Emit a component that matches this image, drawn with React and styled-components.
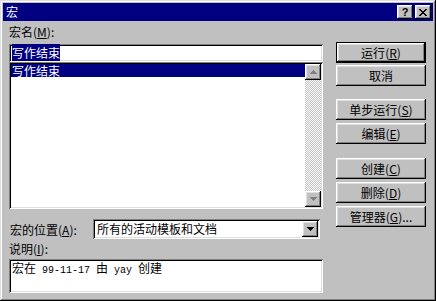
import React from 'react'
import styled, { createGlobalStyle } from 'styled-components'

const GlobalStyle = createGlobalStyle`
  html, body {
    margin: 0;
    padding: 0;
    background: #c0c0c0;
  }
  body {
    font-family: "Noto Sans CJK SC", "Noto Sans", sans-serif;
    font-size: 12px;
    color: #000;
  }
`

const raised = `
  box-shadow: inset -1px -1px #000, inset 1px 1px #fff,
    inset -2px -2px #808080, inset 2px 2px #dfdfdf;
`

const sunken = `
  box-shadow: inset 1px 1px #808080, inset -1px -1px #fff,
    inset 2px 2px #000, inset -2px -2px #dfdfdf;
`

const Window = styled.div`
  width: 436px;
  height: 301px;
  box-sizing: border-box;
  padding: 3px;
  background: #c0c0c0;
  box-shadow: inset -1px -1px #000, inset 1px 1px #dfdfdf,
    inset -2px -2px #808080, inset 2px 2px #fff;
  display: flex;
  flex-direction: column;
`

const TitleBar = styled.div`
  height: 18px;
  background: #000080;
  color: #fff;
  display: flex;
  align-items: center;
  padding: 0 2px 0 3px;
`

const Title = styled.span`
  flex: 1;
  font-size: 12px;
  line-height: 14px;
`

const TitleButton = styled.div`
  width: 16px;
  height: 14px;
  box-sizing: border-box;
  background: #c0c0c0;
  ${raised}
  display: flex;
  align-items: center;
  justify-content: center;
  margin-left: ${p => (p.$gap ? 2 : 0)}px;
  color: #000;
  font-family: "Liberation Sans", sans-serif;
  font-weight: bold;
  font-size: 11px;
  line-height: 1;
`

const Body = styled.div`
  display: grid;
  grid-template-columns: 314px 90px;
  column-gap: 13px;
  padding: 4px 0 0 6px;
`

const LeftCol = styled.div`
  display: flex;
  flex-direction: column;
`

const Label = styled.div`
  line-height: 14px;
  height: 14px;
  white-space: nowrap;
  margin-top: ${p => p.$top || 0}px;
`

const TextField = styled.div`
  height: 18px;
  box-sizing: border-box;
  background: #fff;
  ${sunken}
  margin-top: 5px;
  padding: 2px 0 0 3px;
  line-height: 13px;
`

const Selected = styled.span`
  background: #000080;
  color: #fff;
`

const ListBox = styled.div`
  height: 147px;
  box-sizing: border-box;
  background: #fff;
  ${sunken}
  padding: 2px;
  display: flex;
`

const ListItems = styled.div`
  flex: 1;
`

const ListItem = styled.div`
  height: 13px;
  line-height: 13px;
  padding-left: 1px;
  background: ${p => (p.$active ? '#000080' : 'transparent')};
  color: ${p => (p.$active ? '#fff' : '#000')};
`

const ScrollBar = styled.div`
  width: 16px;
  display: flex;
  flex-direction: column;
  justify-content: space-between;
  background-color: #c0c0c0;
  background-image: repeating-conic-gradient(#fff 0 25%, #c0c0c0 0 50%);
  background-size: 2px 2px;
`

const ArrowButton = styled.div`
  width: 16px;
  height: 16px;
  box-sizing: border-box;
  background: #c0c0c0;
  ${raised}
  display: flex;
  align-items: center;
  justify-content: center;
`

const ComboRow = styled.div`
  display: flex;
  align-items: center;
  margin-top: 10px;
  height: 20px;
`

const ComboLabel = styled.div`
  width: 83px;
  padding-left: 1px;
  white-space: nowrap;
`

const Combo = styled.div`
  flex: 1;
  height: 20px;
  box-sizing: border-box;
  background: #fff;
  ${sunken}
  padding: 2px;
  display: flex;
  align-items: center;
  margin-right: 3px;
`

const ComboText = styled.div`
  flex: 1;
  padding-left: 2px;
  line-height: 14px;
`

const DescBox = styled.div`
  height: 34px;
  box-sizing: border-box;
  background: #fff;
  ${sunken}
  margin-top: 3px;
  padding: 2px 0 0 3px;
  line-height: 14px;
  font-family: "Liberation Mono", "Noto Sans CJK SC", monospace;
  font-size: 10px;
`

const Han = styled.span`
  font-family: "Noto Sans CJK SC", sans-serif;
  font-size: 12px;
`

const RightCol = styled.div`
  display: flex;
  flex-direction: column;
  padding-top: 17px;
`

const Button = styled.div`
  height: 21px;
  box-sizing: border-box;
  background: #c0c0c0;
  display: flex;
  align-items: center;
  justify-content: center;
  white-space: nowrap;
  margin-top: ${p => p.$top || 0}px;
  ${raised}
  ${p =>
    p.$default &&
    `box-shadow: inset 0 0 0 1px #000, inset -2px -2px #000, inset 2px 2px #fff,
      inset -3px -3px #808080, inset 3px 3px #dfdfdf;`}
`

const Key = styled.span`
  text-decoration: underline;
`

const Arrow = ({ up, gray }) => (
  <svg width="7" height="4" viewBox="0 0 7 4">
    <path
      d={up ? 'M3 0h1v1h1v1h1v1h1v1H0V3h1V2h1V1h1z' : 'M0 0h7v1H6v1H5v1H4v1H3V3H2V2H1V1H0z'}
      fill={gray ? '#808080' : '#000'}
    />
  </svg>
)

const Accel = ({ k }) => (
  <>
    (<Key>{k}</Key>)
  </>
)

export default function App() {
  return (
    <>
      <GlobalStyle />
      <Window>
        <TitleBar>
          <Title>宏</Title>
          <TitleButton>?</TitleButton>
          <TitleButton $gap>
            <svg width="8" height="7" viewBox="0 0 8 7">
              <path
                d="M0 0h2v1h1v1h2V1h1V0h2v1H7v1H6v1H5v1h1v1h1v1h1v1H6V6H5V5H3v1H2v1H0V6h1V5h1V4h1V3H2V2H1V1H0z"
                fill="#000"
              />
            </svg>
          </TitleButton>
        </TitleBar>
        <Body>
          <LeftCol>
            <Label>
              宏名<Accel k="M" />:
            </Label>
            <TextField>
              <Selected>写作结束</Selected>
            </TextField>
            <ListBox>
              <ListItems>
                <ListItem $active>写作结束</ListItem>
              </ListItems>
              <ScrollBar>
                <ArrowButton>
                  <Arrow up gray />
                </ArrowButton>
                <ArrowButton>
                  <Arrow gray />
                </ArrowButton>
              </ScrollBar>
            </ListBox>
            <ComboRow>
              <ComboLabel>
                宏的位置<Accel k="A" />:
              </ComboLabel>
              <Combo>
                <ComboText>所有的活动模板和文档</ComboText>
                <ArrowButton>
                  <Arrow />
                </ArrowButton>
              </Combo>
            </ComboRow>
            <Label $top={3}>
              说明<Accel k="I" />:
            </Label>
            <DescBox>
              <Han>宏在</Han> 99-11-17 <Han>由</Han> yay <Han>创建</Han>
            </DescBox>
          </LeftCol>
          <RightCol>
            <Button $default>
              运行<Accel k="R" />
            </Button>
            <Button $top={2}>取消</Button>
            <Button $top={13}>
              单步运行<Accel k="S" />
            </Button>
            <Button $top={3}>
              编辑<Accel k="E" />
            </Button>
            <Button $top={14}>
              创建<Accel k="C" />
            </Button>
            <Button $top={3}>
              删除<Accel k="D" />
            </Button>
            <Button $top={3}>
              管理器<Accel k="G" />...
            </Button>
          </RightCol>
        </Body>
      </Window>
    </>
  )
}
